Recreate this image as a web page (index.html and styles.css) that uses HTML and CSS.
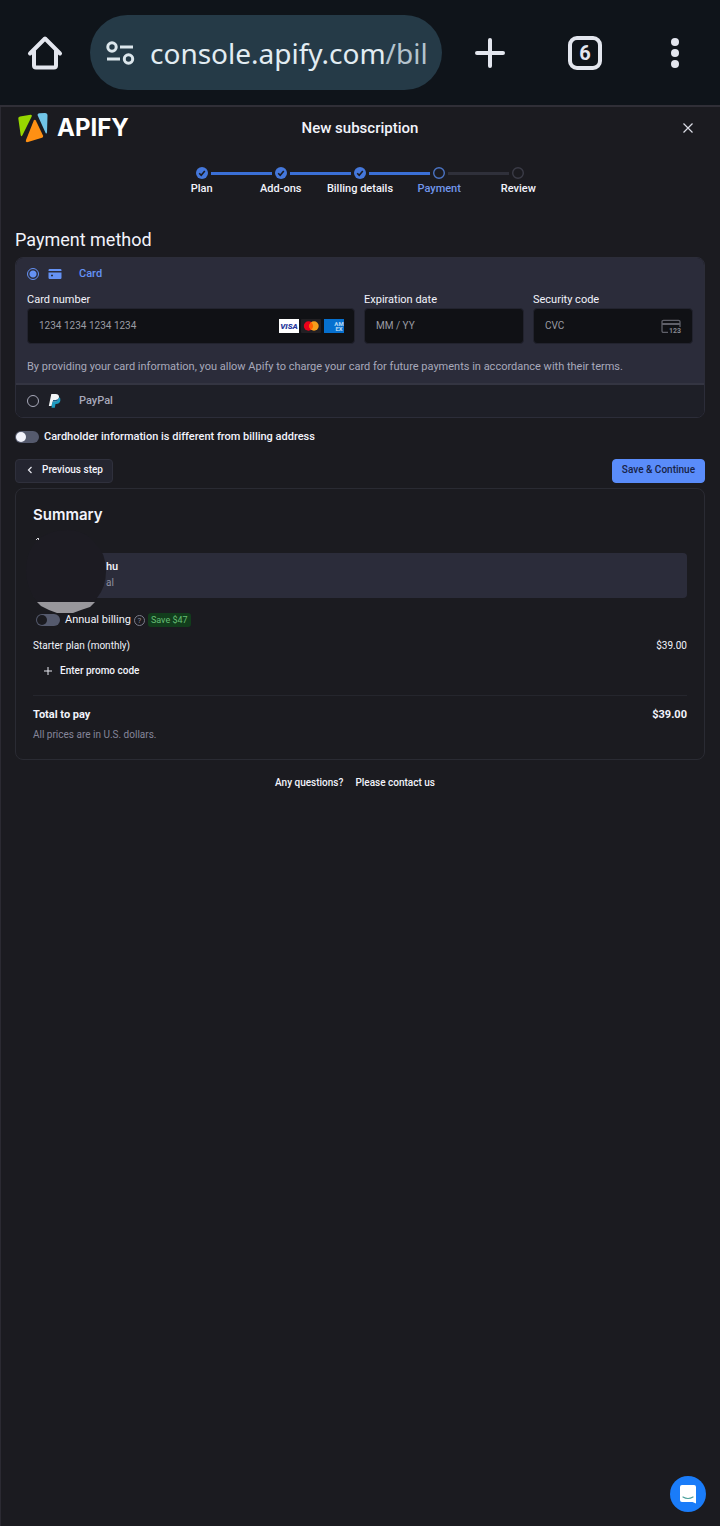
FILE: index.html
```html
<!DOCTYPE html>
<html lang="en">
<head>
    <meta charset="UTF-8">
    <meta name="viewport" content="width=device-width, initial-scale=1.0">
    <title>New subscription</title>
    <link rel="stylesheet" href="styles.css">
</head>
<body>
    <div class="browser-bar">
        <button class="bar-button" aria-label="Home">
            <svg width="36" height="36" viewBox="0 0 36 36" fill="none" stroke="#e3e6ee" stroke-width="4" stroke-linejoin="round" stroke-linecap="round"><path d="M3 18.500 18 3.500 33 18.500"/><path d="M7 16v14.500q0 2 2 2h18q2 0 2-2V16"/></svg>
        </button>
        <div class="address">
            <svg width="30" height="26" viewBox="0 0 30 26" fill="none" stroke="#dce6ec" stroke-width="3"><circle cx="7" cy="7" r="4.200"/><path d="M15 7h13M2 19h13"/><circle cx="23.500" cy="19" r="4.200"/></svg>
            <span class="url">console.apify.com<span class="path">/bil</span></span>
        </div>
        <button class="bar-button" aria-label="New tab">
            <svg width="32" height="32" viewBox="0 0 32 32" stroke="#e3e6ee" stroke-width="4" stroke-linecap="round"><path d="M16 3v26M3 16h26"/></svg>
        </button>
        <button class="bar-button tabs" aria-label="Tabs">6</button>
        <button class="bar-button" aria-label="Menu">
            <svg width="10" height="32" viewBox="0 0 10 32" fill="#e3e6ee"><circle cx="5" cy="5" r="4"/><circle cx="5" cy="16" r="4"/><circle cx="5" cy="27" r="4"/></svg>
        </button>
    </div>

    <div class="page">
        <header class="header">
            <a class="logo" href="#">
                <svg width="30" height="30" viewBox="0 0 30 30"><path fill="#97d700" d="M2 3.500 12.500 1.800q2-.2 1.200 1.600L4.300 22.500q-1 1.500-1.600-.3L.3 5.500q-.2-1.700 1.700-2z"/><path fill="#71c5e8" d="M21.500.2 27 0q2.500 0 2.500 2.500L29 19.500q-.5 2-1.500.2L19.700 2.500q-.6-2 1.800-2.300z"/><path fill="#ff9013" d="M15.800 7.500q1-1.600 2 0L25 22.500q.6 1.700-1 2.300L10 29q-3 .7-2-2z"/></svg>
                <span>APIFY</span>
            </a>
            <h1>New subscription</h1>
            <button class="close" aria-label="Close">
                <svg width="12" height="12" viewBox="0 0 12 12" stroke="#dcdde6" stroke-width="1.200"><path d="M1.500 1.500l9 9M10.500 1.500l-9 9"/></svg>
            </button>
        </header>

        <ol class="steps">
            <li class="step done">
                <div class="track"><i></i><svg width="12" height="12" viewBox="0 0 12 12"><circle cx="6" cy="6" r="6"/><path d="M3.200 6.200l2 2L8.800 4"/></svg><i></i></div>
                Plan
            </li>
            <li class="step done">
                <div class="track"><i></i><svg width="12" height="12" viewBox="0 0 12 12"><circle cx="6" cy="6" r="6"/><path d="M3.200 6.200l2 2L8.800 4"/></svg><i></i></div>
                Add-ons
            </li>
            <li class="step done">
                <div class="track"><i></i><svg width="12" height="12" viewBox="0 0 12 12"><circle cx="6" cy="6" r="6"/><path d="M3.200 6.200l2 2L8.800 4"/></svg><i></i></div>
                Billing details
            </li>
            <li class="step current">
                <div class="track"><i></i><svg width="12" height="12" viewBox="0 0 12 12"><circle cx="6" cy="6" r="5.300"/></svg><i></i></div>
                Payment
            </li>
            <li class="step">
                <div class="track"><i></i><svg width="12" height="12" viewBox="0 0 12 12"><circle cx="6" cy="6" r="5.300"/></svg><i></i></div>
                Review
            </li>
        </ol>

        <main>
            <h2>Payment method</h2>
            <form class="methods">
                <div class="method selected">
                    <label class="method-label">
                        <input type="radio" name="method" checked>
                        <svg width="13" height="10" viewBox="0 0 13 10" fill="#6592f5"><path d="M1.200 0h10.600Q13 0 13 1.200V2H0v-.8Q0 0 1.200 0zM0 3.500h13v5.300q0 1.200-1.200 1.200H1.200Q0 10 0 8.800z"/><path fill="#2b2d3b" d="M2.500 5.700h2v1.500h-2z"/></svg>
                        <span>Card</span>
                    </label>
                    <div class="fields">
                        <div class="field">
                            <label for="number">Card number</label>
                            <div class="input-box">
                                <input id="number" type="text" placeholder="1234 1234 1234 1234">
                                <svg class="brands" width="65" height="14" viewBox="0 0 65 14">
                                    <rect width="20" height="14" fill="#fff"/>
                                    <text x="10" y="10" text-anchor="middle" class="visa">VISA</text>
                                    <rect x="22" width="20" height="14" rx="1" fill="#222024"/>
                                    <circle cx="29.500" cy="7" r="4.700" fill="#eb001b"/>
                                    <circle cx="35" cy="7" r="4.700" fill="#f79e1b"/>
                                    <path fill="#ff5f00" d="M32.200 3.200a4.700 4.700 0 0 1 0 7.600 4.700 4.700 0 0 1 0-7.600z"/>
                                    <rect x="45" width="20" height="14" fill="#0670cf"/>
                                    <text x="60" y="7" text-anchor="middle" class="amex">AM</text>
                                    <text x="60" y="12" text-anchor="middle" class="amex">EX</text>
                                </svg>
                            </div>
                        </div>
                        <div class="field">
                            <label for="expiry">Expiration date</label>
                            <div class="input-box"><input id="expiry" type="text" placeholder="MM / YY"></div>
                        </div>
                        <div class="field">
                            <label for="cvc">Security code</label>
                            <div class="input-box">
                                <input id="cvc" type="text" placeholder="CVC">
                                <svg width="21" height="15" viewBox="0 0 21 15"><path fill="none" stroke="#5f6069" stroke-width="1.300" d="M7 13.300H2.500q-1.500 0-1.500-1.500v-9Q1 1.300 2.500 1.300h15q1.500 0 1.500 1.500V8"/><path fill="#5f6069" d="M1 4h18v2H1z"/><text x="8" y="14" class="cvc-digits">123</text></svg>
                            </div>
                        </div>
                    </div>
                    <p>By providing your card information, you allow Apify to charge your card for future payments in accordance with their terms.</p>
                </div>
                <div class="method">
                    <label class="method-label">
                        <input type="radio" name="method">
                        <svg width="13" height="14" viewBox="0 0 13 14"><path fill="#1d9bc0" d="M4.500 3h6q2 1 1.300 4-.8 3-4.300 3H7l-.7 3.800H3z"/><path fill="#f2f5f7" d="M2.800 0H7q4 .3 3.500 3.800Q10 7.500 6 7.500H4L3 12H.3z"/><path fill="#185b86" d="M4.600 6h2.700q2.500-.3 3.100-2.800Q10.500 7.500 6 7.500H4.300z"/></svg>
                        <span>PayPal</span>
                    </label>
                </div>
            </form>

            <label class="toggle-row cardholder">
                <input class="toggle" type="checkbox">
                Cardholder information is different from billing address
            </label>

            <div class="actions">
                <button class="button">
                    <svg width="6" height="8" viewBox="0 0 6 8" fill="none" stroke="#e8e9f0" stroke-width="1.200"><path d="M4.500 1 1.500 4l3 3"/></svg>
                    Previous step
                </button>
                <button class="button primary">Save &amp; Continue</button>
            </div>

            <section class="summary">
                <h3>Summary</h3>
                <div class="account">
                    <strong>hu</strong>
                    <span>al</span>
                    <svg class="avatar" width="84" height="86" viewBox="0 0 84 86">
                        <path fill="#98979c" d="M12 73h58l-5 5-9 3-8 3H32l-8-3-8-4z"/>
                        <path fill="#1c1b22" d="M42 1q18 0 28 13 11 10 11 28 0 16-9 27-2 4-8 4H12Q1 59 1 42 1 21 13 11 24 1 42 1z"/>
                        <path fill="#d5d5da" d="M11 10h1V9h2v2h-1v-1h-1v1h-1z"/>
                    </svg>
                </div>
                <div class="annual">
                    <label class="toggle-row">
                        <input class="toggle dark" type="checkbox">
                        Annual billing
                    </label>
                    <span class="help">?</span>
                    <span class="badge">Save $47</span>
                </div>
                <div class="line">
                    <span>Starter plan (monthly)</span>
                    <span>$39.00</span>
                </div>
                <button class="promo">
                    <svg width="8" height="8" viewBox="0 0 8 8" stroke="#e8e9f0"><path d="M4 0v8M0 4h8"/></svg>
                    Enter promo code
                </button>
                <div class="line total">
                    <span>Total to pay</span>
                    <span>$39.00</span>
                </div>
                <p>All prices are in U.S. dollars.</p>
            </section>
        </main>

        <footer class="footer">
            <span>Any questions?</span>
            <a href="#">Please contact us</a>
        </footer>
    </div>

    <button class="chat" aria-label="Open chat">
        <svg width="16" height="19" viewBox="0 0 16 19"><path fill="#fff" d="M2 0h12q2 0 2 2v16.500L12.500 17H2q-2 0-2-2V2Q0 0 2 0z"/><path fill="none" stroke="#4aa09b" stroke-width="1.200" stroke-linecap="round" d="M3 12q5 3 10 0"/></svg>
    </button>
</body>
</html>
```
FILE: styles.css
```css
* {
    box-sizing: border-box;
}
body {
    margin: 0;
    min-height: 100vh;
    display: flex;
    flex-direction: column;
    background-color: #1b1b20;
    color: #f2f3fb;
    font-family: Roboto, sans-serif;
    font-size: 11px;
    line-height: 16px;
}
h1, h2, h3, p, ol {
    margin: 0;
    padding: 0;
}
button {
    border: none;
    padding: 0;
    background: none;
    color: inherit;
    font: inherit;
    cursor: pointer;
}
a {
    color: inherit;
    text-decoration: none;
}
svg {
    display: block;
    flex: none;
}

/* Browser bar */
.browser-bar {
    display: flex;
    align-items: center;
    height: 107px;
    padding: 0 40px 0 27px;
    background-color: #0f141a;
    border-bottom: 2px solid #302f37;
}
.address {
    flex: 1;
    display: flex;
    align-items: center;
    gap: 15px;
    min-width: 0;
    height: 75px;
    margin: 0 32px 0 27px;
    padding: 0 12px 0 15px;
    border-radius: 38px;
    background-color: #253a47;
}
.url {
    flex: 1;
    overflow: hidden;
    color: #e2ecf2;
    font-family: "Noto Sans", sans-serif;
    font-size: 28px;
    line-height: 40px;
    white-space: nowrap;
}
.path {
    color: #b4c3cd;
}
.tabs {
    width: 34px;
    height: 34px;
    margin: 0 68px 0 62px;
    border: 4px solid #e3e6ee;
    border-radius: 9px;
    color: #e3e6ee;
    font-size: 20px;
    font-weight: 700;
    line-height: 26px;
}

/* Page */
.page {
    flex: 1;
    padding: 6px 15px 0 14px;
    border-left: 1px solid #2b2a32;
}
.header {
    display: grid;
    grid-template-columns: 1fr auto 1fr;
    align-items: center;
    height: 30px;
}
.logo {
    display: flex;
    align-items: center;
    gap: 9px;
    padding-left: 3px;
    color: #fff;
    font-family: Inter, sans-serif;
    font-size: 24px;
    font-weight: 700;
    line-height: 30px;
}
.header h1 {
    font-size: 15px;
    font-weight: 500;
    line-height: 20px;
}
.close {
    justify-self: end;
    margin-right: 11px;
}

.steps {
    display: grid;
    grid-template-columns: repeat(5, 1fr);
    width: 396px;
    max-width: 100%;
    margin: 24px auto 0;
    list-style: none;
    text-align: center;
    font-weight: 500;
}
.track {
    display: flex;
    align-items: center;
    gap: 3px;
    height: 12px;
    margin-bottom: 2px;
}
.track i {
    flex: 1;
    height: 3px;
    background-color: #2f303a;
}
.track circle {
    fill: none;
    stroke: #3b3c47;
    stroke-width: 1.4;
}
.done .track i,
.current .track i:first-child {
    background-color: #3a6fd6;
}
.done .track circle {
    fill: #4578dc;
    stroke: none;
}
.done .track path {
    fill: none;
    stroke: #1b1b20;
    stroke-width: 1.6;
}
.current {
    color: #7297ec;
}
.current .track circle {
    stroke: #4b74c4;
}
.step:first-child i:first-child,
.step:last-child i:last-child {
    visibility: hidden;
}

h2 {
    margin: 31px 0 5px;
    font-size: 18px;
    font-weight: 400;
    line-height: 24px;
}
.methods {
    border: 1px solid #2c2d39;
    border-radius: 8px;
    overflow: hidden;
}
.method {
    padding: 8px 11px;
    background-color: #1e1f27;
    color: #a8a9ba;
}
.method.selected {
    background-color: #2b2c3a;
    border-bottom: 2px solid #343542;
}
.method-label {
    display: flex;
    align-items: center;
    height: 16px;
    font-weight: 500;
}
.method-label svg {
    width: 14px;
    margin: 0 17px 0 9px;
}
.selected .method-label {
    color: #6592f5;
}
input[type="radio"] {
    appearance: none;
    width: 12px;
    height: 12px;
    margin: 0;
    border: 1px solid #a8a9ba;
    border-radius: 50%;
}
input[type="radio"]:checked {
    border-color: #6592f5;
    background: radial-gradient(#6592f5 3px, transparent 4px);
}
.fields {
    display: grid;
    grid-template-columns: 41fr 20fr 20fr;
    gap: 9px;
    margin: 10px 0 15px;
    color: #f2f3fb;
}
.field label {
    display: block;
}
.input-box {
    display: flex;
    align-items: center;
    height: 36px;
    padding: 0 10px 0 11px;
    border: 1px solid #22232e;
    border-radius: 4px;
    background-color: #101115;
}
input[type="text"] {
    flex: 1;
    width: 0;
    padding: 0;
    border: none;
    outline: none;
    background: none;
    color: #f2f3fb;
    font: inherit;
    font-size: 10px;
}
input::placeholder {
    color: #9a9ba3;
    opacity: 1;
}
.visa {
    fill: #2a3a9c;
    font-size: 8px;
    font-style: italic;
    font-weight: 900;
}
.amex {
    fill: #a9d0f2;
    font-size: 6px;
    font-weight: 900;
}
.cvc-digits {
    fill: #84858e;
    font-size: 7px;
    font-weight: 700;
}

.toggle-row {
    display: flex;
    align-items: center;
    gap: 5px;
    font-weight: 500;
}
.cardholder {
    margin: 11px 0 14px;
}
.toggle {
    appearance: none;
    width: 24px;
    height: 12px;
    margin: 0;
    padding: 1px;
    border-radius: 6px;
    background-color: #555a6d;
}
.toggle::before {
    content: "";
    display: block;
    width: 10px;
    height: 10px;
    border-radius: 50%;
    background-color: #f2f3fb;
}
.toggle.dark::before {
    background-color: #1b1b20;
}

.actions {
    display: flex;
    justify-content: space-between;
    margin-bottom: 5px;
}
.button {
    display: flex;
    align-items: center;
    gap: 9px;
    height: 24px;
    padding: 0 9px 2px;
    border: 1px solid #2f303c;
    border-radius: 4px;
    background-color: #242530;
    font-size: 10px;
    font-weight: 500;
}
.button svg {
    margin-left: 2px;
}
.button.primary {
    border-color: #5a8cfa;
    background-color: #5a8cfa;
    color: #172246;
}

.summary {
    padding: 16px 17px;
    border: 1px solid #2a2b33;
    border-radius: 8px;
}
.summary h3 {
    margin-bottom: 28px;
    font-family: Inter, sans-serif;
    font-size: 15px;
    font-weight: 600;
    line-height: 20px;
}
.account {
    position: relative;
    display: flex;
    flex-direction: column;
    height: 45px;
    padding: 6px 0 0 73px;
    border-radius: 4px;
    background-color: #2b2c3a;
}
.account strong {
    font-weight: 500;
}
.account span {
    color: #8f90a0;
    font-size: 10px;
}
/* The avatar hangs over the edges of the account row */
.avatar {
    position: absolute;
    top: -24px;
    left: -8px;
}
.annual {
    display: flex;
    align-items: center;
    gap: 3px;
    margin: 14px 0 10px 3px;
}
.annual .toggle-row {
    font-weight: 400;
}
.help {
    width: 11px;
    height: 11px;
    border: 1px solid #7c7d8b;
    border-radius: 50%;
    color: #8c8d9b;
    font-size: 8px;
    line-height: 9px;
    text-align: center;
}
.badge {
    padding: 0 3px;
    border-radius: 3px;
    background-color: #123d1c;
    color: #66bd74;
    font-size: 9px;
    line-height: 14px;
}
.line {
    display: flex;
    justify-content: space-between;
    font-size: 10px;
}
.promo {
    display: flex;
    align-items: center;
    gap: 8px;
    margin: 9px 0 16px 11px;
    font-size: 10px;
    font-weight: 500;
}
.total {
    padding: 11px 0 4px;
    border-top: 1px solid #25262d;
    font-size: 11px;
    font-weight: 700;
}
.summary p {
    color: #85869a;
    font-size: 10px;
}
.footer {
    display: flex;
    justify-content: center;
    gap: 12px;
    padding: 15px 10px 0 0;
    font-size: 10px;
    font-weight: 500;
}

.chat {
    position: fixed;
    right: 14px;
    bottom: 14px;
    display: flex;
    align-items: center;
    justify-content: center;
    width: 36px;
    height: 36px;
    border-radius: 50%;
    background-color: #1a7cf9;
}
```
